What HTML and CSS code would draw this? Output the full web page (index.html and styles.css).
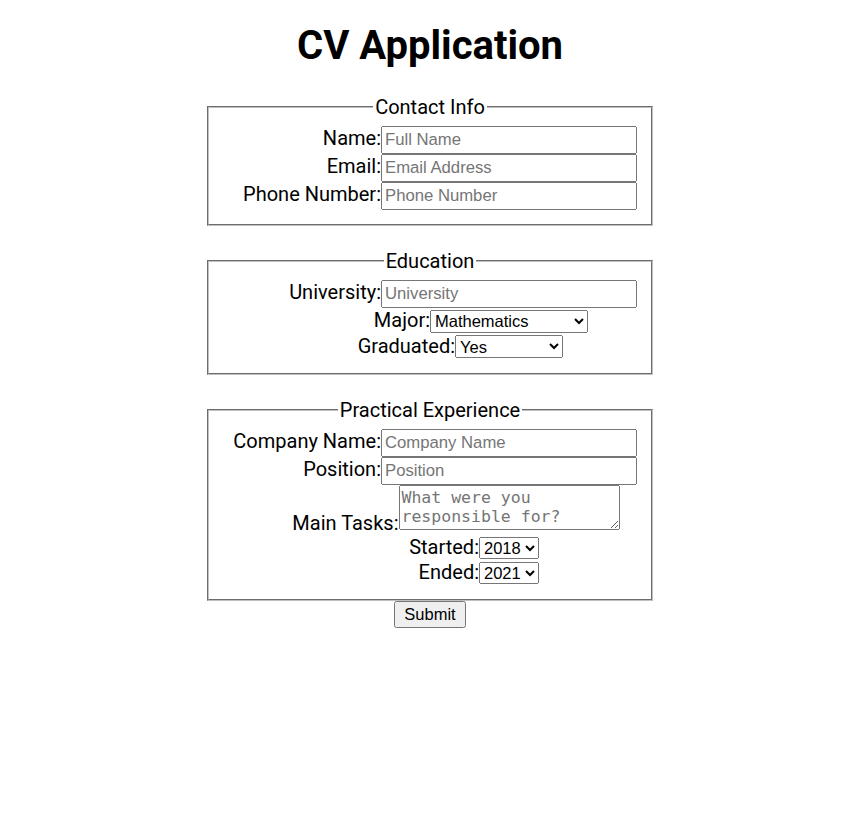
FILE: index.html
```html
<!DOCTYPE html>
<html lang="en">
<head>
<meta charset="utf-8">
<title>CV Application</title>
<link rel="stylesheet" href="styles.css">
</head>
<body>
<h1 class="title">CV Application</h1>
<form class="cv-form">
  <fieldset class="section">
    <legend class="section-title">Contact Info</legend>
    <div class="row"><label class="lbl" for="name">Name:</label><input class="field" id="name" type="text" placeholder="Full Name"></div>
    <div class="row"><label class="lbl" for="email">Email:</label><input class="field" id="email" type="email" placeholder="Email Address"></div>
    <div class="row"><label class="lbl" for="phone">Phone Number:</label><input class="field" id="phone" type="tel" placeholder="Phone Number"></div>
  </fieldset>
  <fieldset class="section">
    <legend class="section-title">Education</legend>
    <div class="row"><label class="lbl" for="uni">University:</label><input class="field" id="uni" type="text" placeholder="University"></div>
    <div class="row"><label class="lbl" for="major">Major:</label><select class="sel sel-major" id="major"><option>Mathematics</option><option>Physics</option><option>Computer Science</option><option>Chemistry</option></select></div>
    <div class="row"><label class="lbl" for="grad">Graduated:</label><select class="sel sel-grad" id="grad"><option>Yes</option><option>No</option></select></div>
  </fieldset>
  <fieldset class="section last">
    <legend class="section-title">Practical Experience</legend>
    <div class="row"><label class="lbl" for="company">Company Name:</label><input class="field" id="company" type="text" placeholder="Company Name"></div>
    <div class="row"><label class="lbl" for="position">Position:</label><input class="field" id="position" type="text" placeholder="Position"></div>
    <div class="row"><label class="lbl" for="tasks">Main Tasks:</label><textarea class="tasks" id="tasks" placeholder="What were you responsible for?"></textarea></div>
    <div class="row"><label class="lbl" for="started">Started:</label><select class="sel sel-year" id="started"><option>2018</option><option>2019</option><option>2020</option><option>2021</option></select></div>
    <div class="row"><label class="lbl" for="ended">Ended:</label><select class="sel sel-year" id="ended"><option>2021</option><option>2022</option><option>2023</option></select></div>
  </fieldset>
  <button class="submit" type="submit">Submit</button>
</form>
</body>
</html>
```
FILE: styles.css
```css
body {
  margin: 0;
  padding: 8px 11px 8px 8px;
  font-family: Roboto, "Noto Sans", sans-serif;
  color: #000;
  background: #fff;
}

.title {
  font-size: 40px;
  font-weight: bold;
  text-align: center;
  margin: 14px 0 26.3px;
}

.cv-form {
  width: 450px;
  margin: 0 auto;
  text-align: center;
}

.section {
  margin: 0 2px 23px;
  padding: 7px 12px 14px;
  border: 2px groove rgb(192, 192, 192);
  font-size: 16px;
}

.section.last {
  margin-bottom: 0;
}

.section-title {
  margin: 0 auto;
  padding: 0 2px;
  font-size: 20px;
}

.row {
  font-size: 20px;
  text-align: center;
}

.lbl {
  display: inline-block;
  width: 158px;
  text-align: right;
}

.field {
  box-sizing: border-box;
  width: 256px;
  height: 28px;
  padding: 3px 2px;
  margin: 0;
  font-family: "Liberation Sans", Arial, sans-serif;
  font-size: 16.7px;
}

.sel {
  box-sizing: border-box;
  margin: 1px 0;
  font-family: "Liberation Sans", Arial, sans-serif;
  font-size: 16.5px;
}

.sel-major {
  width: 158px;
  height: 23px;
}

.sel-grad {
  width: 108px;
  height: 23px;
}

.sel-year {
  width: 60px;
  height: 22px;
}

.tasks {
  box-sizing: border-box;
  width: 221px;
  height: 45px;
  margin: 0;
  padding: 2px;
  font-family: "DejaVu Sans Mono", "Liberation Mono", monospace;
  font-size: 16.5px;
  vertical-align: baseline;
}

.submit {
  box-sizing: border-box;
  height: 27px;
  font-family: "Liberation Sans", Arial, sans-serif;
  font-size: 16.5px;
  padding: 1px 8px;
  margin: 0;
}
```
